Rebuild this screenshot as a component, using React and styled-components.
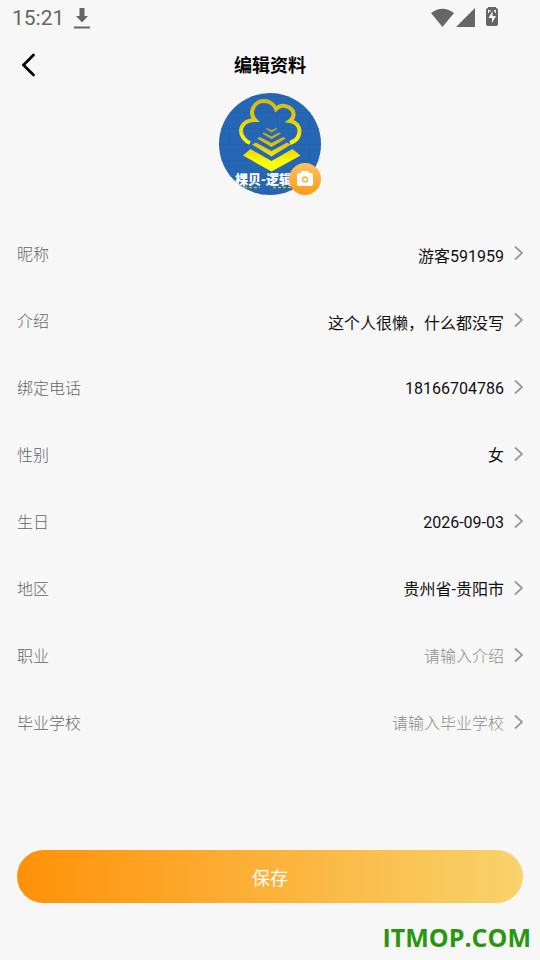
import React from "react";
import styled, { createGlobalStyle, css } from "styled-components";

const GlobalStyle = createGlobalStyle`
  * { box-sizing: border-box; }
  body { margin: 0; background: #f7f7f7; }
  button, input { font: inherit; color: inherit; border: 0; padding: 0; background: none; }
`;

const Page = styled.div`
  min-height: 100vh;
  display: flex;
  flex-direction: column;
  background: #f7f7f7;
  color: #111;
  font-family: Roboto, "Noto Sans CJK SC", sans-serif;
  font-size: 16px;
`;

const StatusBar = styled.div`
  height: 36px;
  padding: 0 40px 0 12px;
  display: flex;
  align-items: center;
  justify-content: space-between;
  color: #666;
  font-size: 21px;
`;

const StatusGroup = styled.div`
  display: flex;
  align-items: center;
  gap: 10px;
`;

const Header = styled.header`
  height: 57px;
  padding: 0 16px;
  display: grid;
  grid-template-columns: 24px 1fr 24px;
  align-items: center;
`;

const BackButton = styled.button`
  display: flex;
  cursor: pointer;
`;

const Title = styled.h1`
  margin: 0;
  padding-top: 2px;
  text-align: center;
  font-size: 18px;
  font-weight: 700;
  line-height: 27px;
  color: #000;
`;

const AvatarButton = styled.button`
  position: relative;
  align-self: center;
  width: 102px;
  height: 102px;
  cursor: pointer;
`;

const CameraBadge = styled.span`
  position: absolute;
  right: 0;
  bottom: 0;
  width: 32px;
  height: 32px;
  display: grid;
  place-items: center;
  border-radius: 50%;
  background: linear-gradient(#fcc265, #fd9a16);
`;

const Form = styled.form`
  flex: 1;
  display: flex;
  flex-direction: column;
  padding: 24px 17px 0;
`;

const Row = styled.div`
  height: 67px;
  display: flex;
  align-items: center;
  gap: 10px;
`;

const Label = styled.label`
  color: #666;
  font-weight: 300;
  white-space: nowrap;
`;

const fieldBox = css`
  flex: 1;
  min-width: 0;
  height: 32px;
  padding-top: 4px;
  line-height: 28px;
  text-align: right;
`;

const TextField = styled.input`
  ${fieldBox}
  outline: none;
  &::placeholder {
    color: #8c8c8c;
    opacity: 1;
    font-weight: 300;
  }
`;

const PickerField = styled.button`
  ${fieldBox}
  cursor: pointer;
`;

const SaveButton = styled.button`
  height: 53px;
  margin-top: 95px;
  border-radius: 27px;
  background: linear-gradient(90deg, #ff9109, #f8d36b);
  color: #fff;
  font-size: 18px;
  cursor: pointer;
`;

const Watermark = styled.footer`
  height: 57px;
  padding: 12px 9px 0;
  text-align: right;
  font-family: "Open Sans", sans-serif;
  font-size: 25px;
  font-weight: 700;
  line-height: 44px;
  color: #29960f;
`;

const fields = [
  { id: "nickname", label: "昵称", value: "游客591959" },
  { id: "intro", label: "介绍", value: "这个人很懒，什么都没写" },
  { id: "phone", label: "绑定电话", value: "18166704786", picker: true },
  { id: "gender", label: "性别", value: "女", picker: true },
  { id: "birthday", label: "生日", value: "2026-09-03", picker: true },
  { id: "region", label: "地区", value: "贵州省-贵阳市", picker: true },
  { id: "job", label: "职业", placeholder: "请输入介绍" },
  { id: "school", label: "毕业学校", placeholder: "请输入毕业学校" },
];

function DownloadIcon() {
  return (
    <svg width="16" height="21" viewBox="0 0 16 21" fill="#666" aria-hidden="true">
      <path d="M5.500 0h5v8H14l-6 6.500L2 8h3.500zM0 18.500h16v2H0z" />
    </svg>
  );
}

function SignalIcons() {
  return (
    <svg width="69" height="22" viewBox="0 0 69 22" fill="#666" aria-hidden="true">
      <path d="M0 6Q11.500-2.500 23 6L11.500 20zM25 20 44 1v19z" />
      <path d="M57 1V0h8v1q2 0 2 2v14q0 2-2 2H57q-2 0-2-2V3q0-2 2-2z" />
      <path d="M61.500 4v5H65l-4 7v-5h-3.500zM57 3h2.500v1.500H58V6h-1zM63 3h2v3h-1V4.500h-1z" fill="#f7f7f7" />
    </svg>
  );
}

function Chevron() {
  return (
    <svg width="9" height="16" viewBox="0 0 9 16" fill="none" stroke="#999" strokeWidth="1.800" aria-hidden="true">
      <path d="M1 1.500 8 8l-7 6.500" />
    </svg>
  );
}

function AvatarArt() {
  return (
    <svg width="102" height="102" viewBox="0 0 102 102" aria-hidden="true">
      <defs>
        <clipPath id="disc"><circle cx="51" cy="51" r="51" /></clipPath>
        <linearGradient id="gold" gradientUnits="userSpaceOnUse" x1="0" y1="5" x2="0" y2="52">
          <stop offset="0" stopColor="#d5b516" />
          <stop offset="0.500" stopColor="#e3d010" />
          <stop offset="1" stopColor="#ffff00" />
        </linearGradient>
        <linearGradient id="steps" gradientUnits="userSpaceOnUse" x1="0" y1="34" x2="0" y2="70">
          <stop offset="0" stopColor="#b39a28" />
          <stop offset="0.400" stopColor="#ddb912" />
          <stop offset="1" stopColor="#ffff00" />
        </linearGradient>
        <pattern id="bricks" width="32" height="32" patternUnits="userSpaceOnUse">
          <path d="M0 3.500h32M0 19.500h32M10.500 3v16M26.500 19v13M26.500 0v3" stroke="#2261b0" fill="none" />
        </pattern>
      </defs>
      <g clipPath="url(#disc)">
        <rect width="102" height="102" fill="#2566b5" />
        <rect width="102" height="102" fill="url(#bricks)" />
        <path
          d="M31 50C26 48 22 43 22 38C22 32 27 27 36 27C33 24 33 21 33 19C34 12 39 8 45 8C50 8 55 11 57 16C60 13 63 12.500 66 13C72 14 75 18 74.500 22Q74 26 71 28C77 29 80.500 33 80.500 38C80.500 44 77 48 71 50"
          fill="none"
          stroke="url(#gold)"
          strokeWidth="4"
        />
        <g fill="url(#steps)">
          <path d="M47 34.500l5.500 2.500 5.500-2.500v1.500l-5.500 3.500-5.500-3.500z" />
          <path d="M43 40.500l2-1 7.500 4 7.500-4 2 1-9.500 5.500z" />
          <path d="M38 45.500l3-1.500 11.500 6 11.500-6 3 1.500-14.500 8.500z" />
          <path d="M33 51.500l4-2 15.500 8.500 15.500-8.500 4 2-19.500 12z" />
          <path d="M24 62.500l7.500-6.500 21 12 21-12 8 6.500-29 16z" />
        </g>
        <text x="16" y="91" fill="#fff" fontFamily="Noto Sans CJK SC, sans-serif" fontSize="13" fontWeight="900">棵贝-逻辑</text>
        <path d="M25 94.500h16M54 94.500h18" stroke="#b8bd36" strokeWidth="1.500" strokeDasharray="3 2" />
      </g>
    </svg>
  );
}

export default function App() {
  return (
    <Page>
      <GlobalStyle />
      <StatusBar>
        <StatusGroup><span>15:21</span><DownloadIcon /></StatusGroup>
        <StatusGroup><SignalIcons /></StatusGroup>
      </StatusBar>
      <Header>
        <BackButton type="button" aria-label="返回">
          <svg width="24" height="24" viewBox="0 0 24 24" fill="none" stroke="#000" strokeWidth="2.700" strokeLinecap="round">
            <path d="M17.500 2 7.500 12l10 10" />
          </svg>
        </BackButton>
        <Title>编辑资料</Title>
      </Header>
      <AvatarButton type="button" aria-label="更换头像">
        <AvatarArt />
        <CameraBadge>
          <svg width="18" height="16" viewBox="0 0 18 16" aria-hidden="true">
            <path d="M5 2q0-2 2-2h4q2 0 2 2h2q2 0 2 2v9q0 2-2 2H3q-2 0-2-2V4q0-2 2-2z" fill="#fff" />
            <circle cx="9" cy="8.500" r="2.500" fill="none" stroke="#fdb34a" strokeWidth="1.500" />
          </svg>
        </CameraBadge>
      </AvatarButton>
      <Form onSubmit={(e) => e.preventDefault()}>
        {fields.map((f) => (
          <Row key={f.id}>
            <Label htmlFor={f.id}>{f.label}</Label>
            {f.picker ? (
              <PickerField id={f.id} type="button">{f.value}</PickerField>
            ) : (
              <TextField id={f.id} type="text" defaultValue={f.value} placeholder={f.placeholder} />
            )}
            <Chevron />
          </Row>
        ))}
        <SaveButton type="submit">保存</SaveButton>
      </Form>
      <Watermark>ITMOP.COM</Watermark>
    </Page>
  );
}
